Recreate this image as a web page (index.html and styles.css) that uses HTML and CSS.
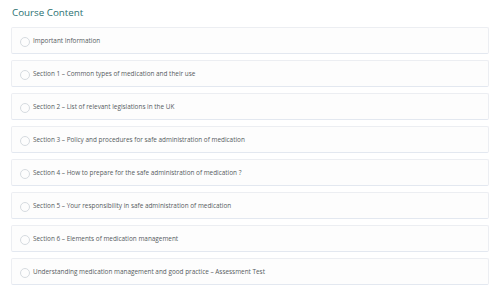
FILE: index.html
```html
<!DOCTYPE html>
<html lang="en">
<head>
    <meta charset="UTF-8">
    <meta name="viewport" content="width=device-width, initial-scale=1.0">
    <title>Course Content</title>
    <link rel="stylesheet" href="styles.css">
</head>
<body>

    <div class="course">
        <h2 class="course-title">Course Content</h2>

        <ul class="lessons">
            <li class="lesson"><span class="check"></span>Important Information</li>
            <li class="lesson"><span class="check"></span>Section 1 – Common types of medication and their use</li>
            <li class="lesson"><span class="check"></span>Section 2 – List of relevant legislations in the UK</li>
            <li class="lesson"><span class="check"></span>Section 3 – Policy and procedures for safe administration of medication</li>
            <li class="lesson"><span class="check"></span>Section 4 – How to prepare for the safe administration of medication ?</li>
            <li class="lesson"><span class="check"></span>Section 5 – Your responsibility in safe administration of medication</li>
            <li class="lesson"><span class="check"></span>Section 6 – Elements of medication management</li>
            <li class="lesson"><span class="check"></span>Understanding medication management and good practice – Assessment Test</li>
        </ul>
    </div>

</body>
</html>
```

FILE: styles.css
```css
body {
    font-family: "Open Sans", sans-serif;
    background-color: #ffffff;
    margin: 0;
    padding: 0;
}

.course {
    padding: 6px 11px 0 11px;
}

.course-title {
    font-size: 9.8px;
    font-weight: 500;
    color: #2a7071;
    margin: 0 0 8px 1px;
    line-height: 13px;
}

.lessons {
    list-style: none;
    margin: 0;
    padding: 0;
    display: flex;
    flex-direction: column;
    gap: 6px;
}

.lesson {
    display: flex;
    align-items: center;
    height: 25px;
    padding: 0 8px;
    border: 1px solid #eceef2;
    border-bottom-color: #e3e8f0;
    border-radius: 2px;
    background-color: #fdfdfd;
    font-size: 6.4px;
    color: #555b60;
}

.check {
    width: 8px;
    height: 8px;
    border: 1px solid #d6dbe0;
    border-radius: 50%;
    margin: 3px 3px 0 0;
    flex-shrink: 0;
}
```
